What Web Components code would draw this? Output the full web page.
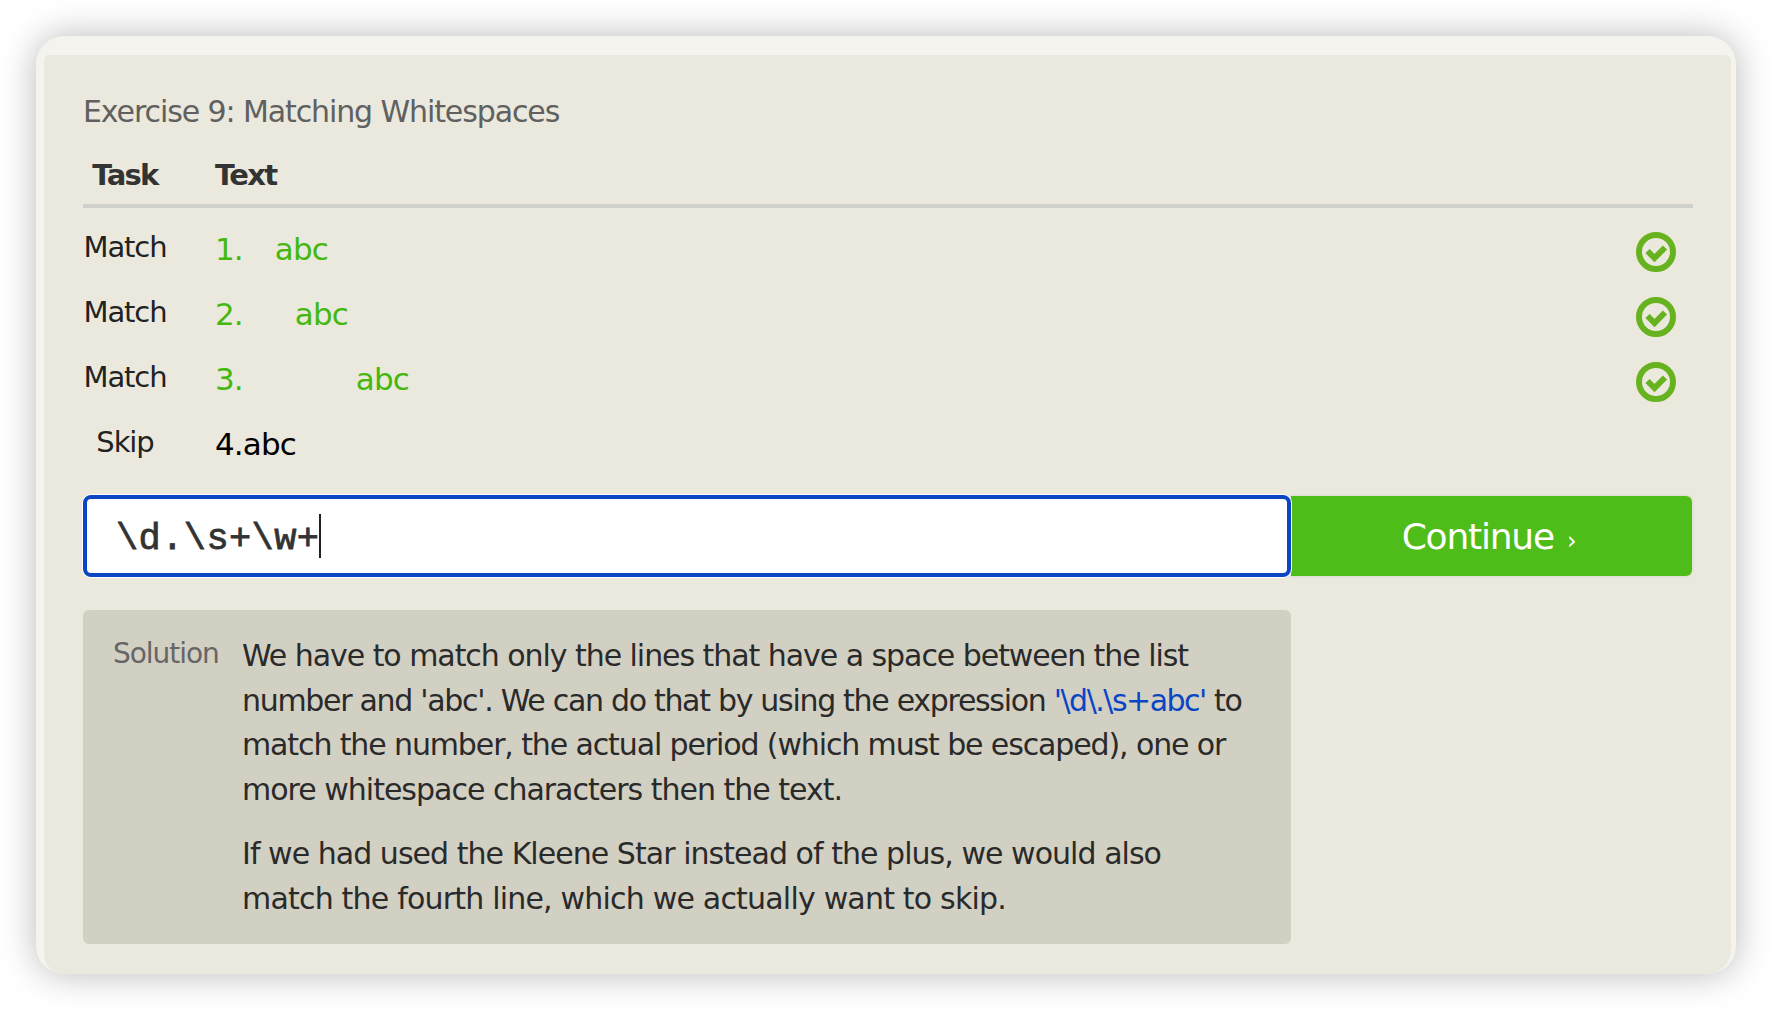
<!DOCTYPE html>
<html>
<head>
<meta charset="utf-8">
<title>Exercise 9</title>
<style>
  html, body { margin: 0; background: #fff; }
  body { padding: 36px; height: 1010px; box-sizing: border-box; font-family: "DejaVu Sans", sans-serif; }
  ex-solution code { font: inherit; color: #0a45c4; letter-spacing: -1.5px; }
  /* one block per line, so each can be tuned to the reference's line widths */
  ex-solution p > span { display: block; white-space: nowrap; }
</style>
</head>
<body>
<ex-card heading="Exercise 9: Matching Whitespaces">
  <ex-row task="Match" number="1." text="abc" gap="32" done></ex-row>
  <ex-row task="Match" number="2." text="abc" gap="52" done></ex-row>
  <ex-row task="Match" number="3." text="abc" gap="113" done></ex-row>
  <ex-row task="Skip" number="4." text="abc" gap="0" skip></ex-row>
  <ex-answer slot="answer" value="\d.\s+\w+" label="Continue"></ex-answer>
  <ex-solution slot="solution">
    <p>
      <span>We have to match only the lines that have a space between the list</span>
      <span style="letter-spacing:-1.3px">number and 'abc'. We can do that by using the expression <code>'\d\.\s+abc'</code> to</span>
      <span style="letter-spacing:-1.12px">match the number, the actual period (which must be escaped), one or</span>
      <span style="letter-spacing:-1px">more whitespace characters then the text.</span>
    </p>
    <p>
      <span style="letter-spacing:-.96px">If we had used the Kleene Star instead of the plus, we would also</span>
      <span style="letter-spacing:-.8px">match the fourth line, which we actually want to skip.</span>
    </p>
  </ex-solution>
</ex-card>

<script>
const baseFont = `"DejaVu Sans", sans-serif`;

class ExCard extends HTMLElement {
  constructor() {
    super();
    this.attachShadow({ mode: "open" }).innerHTML = `
      <style>
        :host {
          display: block;
          width: 1700px;
          height: 938px;
          box-sizing: border-box;
          background: #f4f3ee;
          padding: 19px 5px 0 8px;
          border-radius: 28px;
          box-shadow: 0 0 36px rgba(0, 0, 0, .28);
          font-family: ${baseFont};
        }
        .inner {
          height: 100%;
          box-sizing: border-box;
          background: #ebe9dd;
          border-radius: 6px 6px 24px 20px;
          padding: 37px 38px 0 39px;
        }
        h1 {
          margin: 0;
          font-size: 30px;
          line-height: 40px;
          font-weight: 400;
          color: #606060;
          letter-spacing: -1.1px;
        }
        .head {
          display: grid;
          grid-template-columns: 132px 1fr;
          margin-top: 23px;
          padding-bottom: 9px;
          border-bottom: 4px solid #d0d0cd;
          font-size: 29px;
          line-height: 40px;
          font-weight: 700;
          color: #333;
          letter-spacing: -1.7px;
        }
        .head span:first-child { width: 84px; text-align: center; }
        .rows { margin-top: 8px; }
        .bottom { margin-top: 19px; }
      </style>
      <div class="inner">
        <h1></h1>
        <div class="head"><span>Task</span><span>Text</span></div>
        <div class="rows"><slot></slot></div>
        <div class="bottom"><slot name="answer"></slot></div>
        <slot name="solution"></slot>
      </div>
    `;
  }
  connectedCallback() {
    this.shadowRoot.querySelector("h1").textContent = this.getAttribute("heading");
  }
}

class ExRow extends HTMLElement {
  constructor() {
    super();
    this.attachShadow({ mode: "open" }).innerHTML = `
      <style>
        :host {
          display: grid;
          grid-template-columns: 84px 48px 1fr 40px;
          align-items: center;
          height: 65px;
          padding-right: 17px;
          font-size: 29px;
          letter-spacing: -1.1px;
          color: #222;
        }
        .task { grid-column: 1; text-align: center; margin-top: -3px; }
        .text { grid-column: 3; color: #44b80f; font-size: 31px; letter-spacing: -.9px; }
        :host([skip]) .text { color: #000; }
      </style>
      <span class="task"></span>
      <span class="text"><span class="num"></span><span class="val"></span></span>
    `;
  }
  connectedCallback() {
    const root = this.shadowRoot;
    root.querySelector(".task").textContent = this.getAttribute("task");
    root.querySelector(".num").textContent = this.getAttribute("number");
    const val = root.querySelector(".val");
    val.textContent = this.getAttribute("text");
    val.style.marginLeft = this.getAttribute("gap") + "px";
    if (this.hasAttribute("done")) {
      root.appendChild(document.createElement("ex-check"));
    }
  }
}

class ExCheck extends HTMLElement {
  constructor() {
    super();
    this.attachShadow({ mode: "open" }).innerHTML = `
      <style>
        :host { display: block; grid-column: 4; width: 40px; height: 40px; margin-top: 7px; }
        svg { display: block; }
      </style>
      <svg width="40" height="40" viewBox="0 0 40 40" fill="none" stroke="#67b31f">
        <circle cx="20" cy="20" r="17" stroke-width="6"/>
        <path d="M11.500 19l7 7L29 15.500" stroke-width="6"/>
      </svg>
    `;
  }
}

class ExAnswer extends HTMLElement {
  constructor() {
    super();
    this.attachShadow({ mode: "open" }).innerHTML = `
      <style>
        :host { display: flex; height: 82px; width: 1609px; }
        .input {
          flex: 0 0 1208px;
          box-sizing: border-box;
          display: flex;
          align-items: center;
          padding-left: 29px;
          background: #fff;
          border: 4px solid #0a45c4;
          border-radius: 8px;
          box-shadow: 0 0 0 1px #fff;
          position: relative;
          font-family: "Liberation Mono", monospace;
          font-size: 37px;
          letter-spacing: .4px;
          -webkit-text-stroke: .8px #333;
          color: #333;
        }
        .value { position: relative; top: 3px; }
        .caret { width: 2px; height: 44px; background: #222; }
        button {
          flex: 1;
          margin: 1px 0;
          border: 0;
          border-radius: 0 6px 6px 0;
          background: #4fbd19;
          box-shadow: 0 0 0 1.500px #e2e0d4;
          color: #fff;
          font: 36px ${baseFont};
          letter-spacing: -1.2px;
          padding: 0 6px 0 0;
        }
        .arrow { font-size: 24px; margin-left: 13px; }
      </style>
      <div class="input"><span class="value"></span><span class="caret"></span></div>
      <button><span class="label"></span><span class="arrow">›</span></button>
    `;
  }
  connectedCallback() {
    this.shadowRoot.querySelector(".value").textContent = this.getAttribute("value");
    this.shadowRoot.querySelector(".label").textContent = this.getAttribute("label");
  }
}

class ExSolution extends HTMLElement {
  constructor() {
    super();
    this.attachShadow({ mode: "open" }).innerHTML = `
      <style>
        :host {
          display: grid;
          grid-template-columns: 129px 1fr;
          width: 1208px;
          height: 334px;
          box-sizing: border-box;
          margin-top: 33px;
          padding: 24px 40px 0 30px;
          background: #d2d0c3;
          border-radius: 6px;
          font-size: 30px;
          line-height: 44.500px;
          letter-spacing: -1.050px;
          color: #2a2a2a;
        }
        .label { font-size: 28px; color: #666; line-height: 40px; }
        ::slotted(p) { margin: 0 0 20px; }
      </style>
      <span class="label">Solution</span>
      <div><slot></slot></div>
    `;
  }
}

customElements.define("ex-check", ExCheck);
customElements.define("ex-row", ExRow);
customElements.define("ex-answer", ExAnswer);
customElements.define("ex-solution", ExSolution);
customElements.define("ex-card", ExCard);
</script>
</body>
</html>
